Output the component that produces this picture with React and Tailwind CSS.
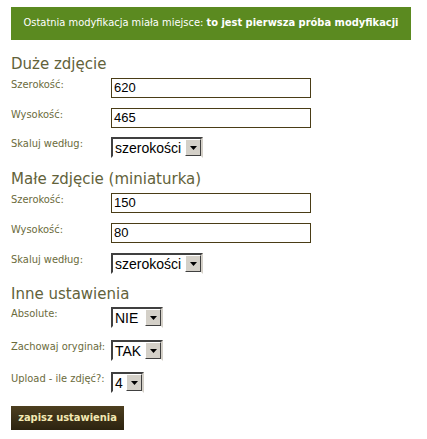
import React from 'react'

const sans = { fontFamily: '"DejaVu Sans Condensed", "DejaVu Sans", sans-serif' }

function Heading({ children, className = '' }) {
  return (
    <h2 className={`font-['DejaVu_Sans',sans-serif] text-[15px] leading-[18px] text-[#62623a] font-normal ${className}`}>
      {children}
    </h2>
  )
}

function Label({ children }) {
  return <div className="w-[100px] shrink-0 text-[11px] leading-[14px] text-[#6b6b3c]">{children}</div>
}

function TextBox({ value }) {
  return (
    <div className="flex h-[20px] w-[200px] items-center border border-[#4a3d16] bg-white px-[2px] font-['Liberation_Sans',Arial,sans-serif] text-[13px] text-black">
      {value}
    </div>
  )
}

function Select({ value, width }) {
  return (
    <div className={`flex h-[21px] border-2 border-t-[#404040] border-l-[#404040] border-r-[#d4d0c8] border-b-[#ffffff] bg-white ${width}`}>
      <div className="flex flex-1 items-center pl-[2px] font-['Liberation_Sans',Arial,sans-serif] text-[14px] leading-none text-black">
        {value}
      </div>
      <div className="flex w-[16px] items-center justify-center border border-t-white border-l-white border-r-[#404040] border-b-[#404040] bg-[#d4d0c8]">
        <svg width="7" height="4" viewBox="0 0 7 4">
          <path d="M0 0h7L3.5 4z" fill="#000" />
        </svg>
      </div>
    </div>
  )
}

function Row({ label, children, className = '' }) {
  return (
    <div className={`flex items-start ${className}`}>
      <Label>{label}</Label>
      {children}
    </div>
  )
}

export default function App() {
  return (
    <div className="min-h-[439px] w-[427px] bg-white px-[11px] pt-[7px]" style={sans}>
      <div className="flex h-[33px] w-[400px] items-center justify-center bg-[#5b8a20] text-[11px] text-white">
        <span>
          Ostatnia modyfikacja miała miejsce: <b>to jest pierwsza próba modyfikacji</b>
        </span>
      </div>

      <Heading className="mt-[15px] mb-[5px]">Duże zdjęcie</Heading>
      <Row label="Szerokość:" className="mb-[10px]">
        <TextBox value="620" />
      </Row>
      <Row label="Wysokość:" className="mb-[9px]">
        <TextBox value="465" />
      </Row>
      <Row label="Skaluj według:">
        <Select value="szerokości" width="w-[92px]" />
      </Row>

      <Heading className="mt-[12px] mb-[5px]">Małe zdjęcie (miniaturka)</Heading>
      <Row label="Szerokość:" className="mb-[10px]">
        <TextBox value="150" />
      </Row>
      <Row label="Wysokość:" className="mb-[10px]">
        <TextBox value="80" />
      </Row>
      <Row label="Skaluj według:">
        <Select value="szerokości" width="w-[92px]" />
      </Row>

      <Heading className="mt-[11px] mb-[4px]">Inne ustawienia</Heading>
      <Row label="Absolute:" className="mb-[12px]">
        <Select value="NIE" width="w-[52px]" />
      </Row>
      <Row label="Zachowaj oryginał:" className="mb-[11px]">
        <Select value="TAK" width="w-[52px]" />
      </Row>
      <Row label="Upload - ile zdjęć?:" className="mb-[11px]">
        <Select value="4" width="w-[33px]" />
      </Row>

      <button className="h-[24px] w-[113px] bg-gradient-to-b from-[#4d3f1f] to-[#2c2310] text-[11px] font-bold text-[#f3e9b3]">
        zapisz ustawienia
      </button>
    </div>
  )
}
